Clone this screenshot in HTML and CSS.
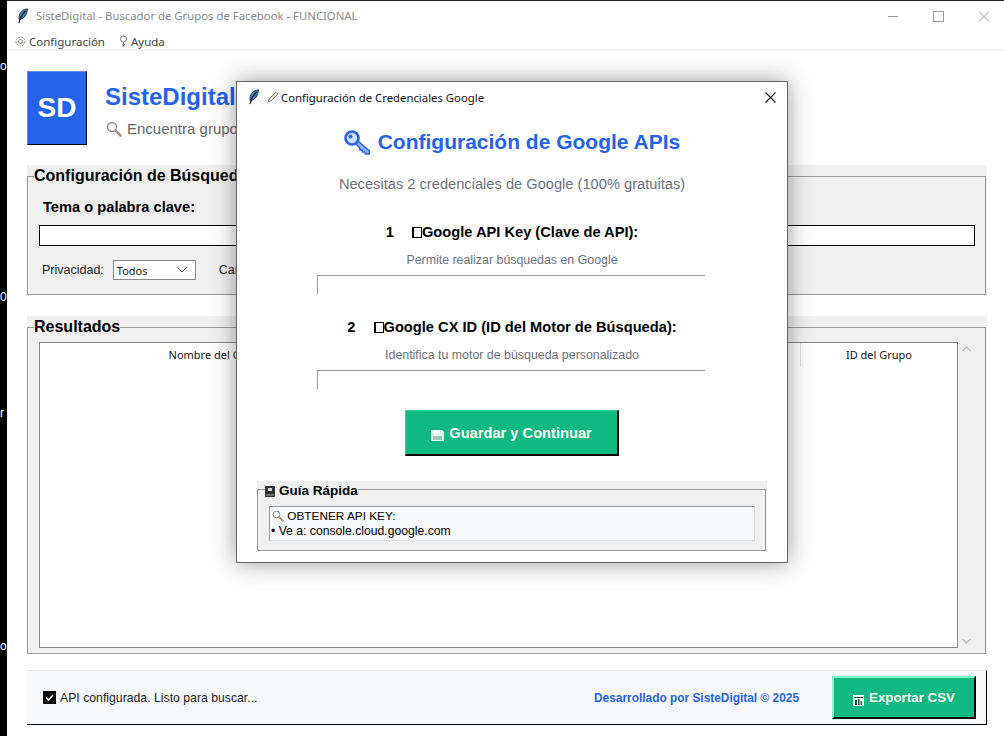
FILE: index.html
```html
<!DOCTYPE html>
<html lang="es">
<head>
    <meta charset="UTF-8">
    <title>SisteDigital - Buscador de Grupos de Facebook</title>
    <link rel="stylesheet" href="styles.css">
</head>
<body>
    <svg class="sprite" width="0" height="0">
        <symbol id="feather" viewBox="0 0 12 18">
            <path d="M11.500.500C7 .500 2.500 3.500 1.500 8.500c-.4 2-.3 3.500 0 5.500l1.500-1c3.500-1 6.500-4 7.500-8 .4-1.500.6-3 1-4.500z" fill="#3f83c8" stroke="#10202c" stroke-width="1"/>
            <path d="M9 3C6 6 3 10 1 17.500" fill="none" stroke="#0b0f14" stroke-width="1.300"/>
        </symbol>
        <symbol id="lens" viewBox="0 0 16 16">
            <circle cx="6" cy="6" r="4.500" fill="#f4f7f8" stroke="#8a8f92" stroke-width="1.300"/>
            <path d="M9.500 9.500l5 5" stroke="#a8917f" stroke-width="2.600" stroke-linecap="round"/>
        </symbol>
    </svg>

    <!-- restos del escritorio detras de la ventana -->
    <div class="desk-char desk-1">o</div>
    <div class="desk-char desk-2">0</div>
    <div class="desk-char desk-3">r</div>
    <div class="desk-char desk-4">o</div>

    <div class="window">
        <div class="titlebar">
            <svg class="feather-icon"><use href="#feather"/></svg>
            <span class="title-text">SisteDigital - Buscador de Grupos de Facebook - FUNCIONAL</span>
            <div class="win-controls">
                <svg width="12" height="12" viewBox="0 0 12 12"><path d="M0 6.500h10" stroke="#999"/></svg>
                <svg width="12" height="12" viewBox="0 0 12 12"><rect x=".5" y="1.500" width="10" height="10" fill="none" stroke="#999"/></svg>
                <svg width="12" height="12" viewBox="0 0 12 12"><path d="M1 1.500l10 10M11 1.500l-10 10" stroke="#999"/></svg>
            </div>
        </div>
        <div class="menubar">
            <span class="menu-item">
                <svg width="11" height="11" viewBox="0 0 11 11"><circle cx="5.500" cy="5.500" r="2" fill="none" stroke="#888"/><circle cx="5.500" cy="5.500" r="4.500" fill="none" stroke="#888" stroke-dasharray="2 1"/></svg>
                Configuración
            </span>
            <span class="menu-item">
                <svg width="9" height="12" viewBox="0 0 9 12"><circle cx="4.500" cy="4" r="3" fill="none" stroke="#888"/><path d="M4.500 7v4M3 9.500h3M3 11h3" stroke="#888"/></svg>
                Ayuda
            </span>
        </div>

        <div class="content">
            <header class="brand">
                <div class="logo">SD</div>
                <div class="brand-text">
                    <h1>SisteDigital</h1>
                    <p><svg class="lens-big"><use href="#lens"/></svg> Encuentra grupos</p>
                </div>
            </header>

            <div class="group group-search">
                <fieldset>
                    <legend>Configuración de Búsqueda</legend>
                    <div class="field-label">Tema o palabra clave:</div>
                    <div class="entry"></div>
                    <div class="options">
                        <span>Privacidad:</span>
                        <div class="select">Todos
                            <svg width="10" height="6" viewBox="0 0 10 6"><path d="M.5.500L5 5 9.500.500" fill="none" stroke="#555"/></svg>
                        </div>
                        <span class="option-next">Cantidad:</span>
                    </div>
                </fieldset>
            </div>

            <div class="group group-results">
                <fieldset>
                    <legend>Resultados</legend>
                    <div class="results-body">
                        <div class="tree">
                            <div class="tree-head">
                                <div class="col-name">Nombre del Grupo</div>
                                <div class="col-id">ID del Grupo</div>
                            </div>
                        </div>
                        <div class="scrollbar">
                            <svg width="9" height="6" viewBox="0 0 9 6"><path d="M.5 5L4.500 1l4 4" fill="none" stroke="#bbb" stroke-width="1.500"/></svg>
                            <svg width="9" height="6" viewBox="0 0 9 6"><path d="M.5 1l4 4 4-4" fill="none" stroke="#bbb" stroke-width="1.500"/></svg>
                        </div>
                    </div>
                </fieldset>
            </div>

            <footer class="statusbar">
                <svg class="check" width="13" height="13" viewBox="0 0 13 13"><rect width="13" height="13" fill="#0a0a0a"/><path d="M3 6.500l2.500 2.500L10 4" fill="none" stroke="#fff" stroke-width="1.600"/></svg>
                <span class="status-text">API configurada. Listo para buscar...</span>
                <span class="credit">Desarrollado por SisteDigital © 2025</span>
                <button class="btn btn-export">
                    <svg class="btn-icon" width="11" height="11" viewBox="0 0 11 11"><rect width="11" height="11" fill="#eef7f3"/><path d="M1 2h9v1H1zM2 5h2v5H2zM5 4h1.500v6H5zM7.500 6H9v4H7.500z" fill="#27584a"/></svg>
                    Exportar CSV
                </button>
            </footer>
        </div>
    </div>

    <!-- dialogo de credenciales -->
    <div class="dialog">
        <div class="dialog-title">
            <svg class="feather-icon"><use href="#feather"/></svg>
            <svg width="12" height="12" viewBox="0 0 12 12"><path d="M1.500 10.500l.6-2.500L9 1.200l1.800 1.800L4 9.900z" fill="#f3e9d8" stroke="#777"/></svg>
            <span>Configuración de Credenciales Google</span>
            <svg class="dialog-close" width="11" height="11" viewBox="0 0 11 11"><path d="M.5.500l10 10M10.500.500l-10 10" stroke="#111" stroke-width="1.100"/></svg>
        </div>
        <div class="dialog-body">
            <h2>
                <svg width="26" height="25" viewBox="0 0 26 25"><circle cx="8" cy="8" r="6.500" fill="#cfdfff" stroke="#2563eb" stroke-width="2.600"/><circle cx="6.500" cy="6.500" r="2" fill="#2563eb"/><path d="M12 14l2.500-2.500L25.500 21v3h-4l-1-2-2 0-.5-2-2 0-.5-2z" fill="#8fb0f8" stroke="#2563eb" stroke-width="1.400"/></svg>
                Configuración de Google APIs
            </h2>
            <p class="dialog-sub">Necesitas 2 credenciales de Google (100% gratuitas)</p>

            <div class="cred-label cred-first">1<span class="missing-glyph"></span>Google API Key (Clave de API):</div>
            <div class="cred-hint">Permite realizar búsquedas en Google</div>
            <div class="cred-input"></div>

            <div class="cred-label cred-second">2<span class="missing-glyph"></span>Google CX ID (ID del Motor de Búsqueda):</div>
            <div class="cred-hint">Identifica tu motor de búsqueda personalizado</div>
            <div class="cred-input"></div>

            <button class="btn btn-save">
                <svg class="btn-icon" width="13" height="12" viewBox="0 0 13 12"><path d="M0 1h11l2 2v9H0z" fill="#e6f3ee"/><path d="M3 1h6v3H3z" fill="#fff"/><path d="M2 7h9v4H2z" fill="#9fc7b8"/></svg>
                Guardar y Continuar
            </button>

            <div class="group group-guide">
                <fieldset>
                    <legend>
                        <svg class="guide-icon" width="10" height="11" viewBox="0 0 10 11"><rect width="10" height="11" rx="1" fill="#2e3338"/><rect x="3" y="2" width="4" height="3" fill="#d8d8d8"/><path d="M1 9h8" stroke="#aaa"/></svg>
                        Guía Rápida
                    </legend>
                    <div class="guide-text">
                        <div class="guide-head"><svg class="lens-small"><use href="#lens"/></svg> OBTENER API KEY:</div>
                        <div>• Ve a: console.cloud.google.com</div>
                    </div>
                </fieldset>
            </div>
        </div>
    </div>
</body>
</html>
```

FILE: styles.css
```css
* { margin: 0; padding: 0; box-sizing: border-box; }
html, body { height: 736px; overflow: hidden; }
body {
    background: #000;
    font-family: "Liberation Sans", Arial, sans-serif;
    color: #000;
    position: relative;
}
.sprite { position: absolute; }

.desk-char {
    position: absolute;
    left: 0;
    width: 7px;
    overflow: hidden;
    color: #fff;
    font-size: 12px;
    line-height: 13px;
}
.desk-1 { top: 60px; }
.desk-2 { top: 291px; }
.desk-3 { top: 407px; }
.desk-4 { top: 640px; }

.window {
    margin-left: 7px;
    height: 736px;
    background: #fff;
    border-top: 1px solid #222;
}
.titlebar {
    height: 29px;
    display: flex;
    align-items: center;
    padding-left: 11px;
    font-family: "Noto Sans", sans-serif;
    font-size: 11.33px;
    color: #8a8a8a;
}
.feather-icon { width: 10px; height: 16px; flex: none; }
.title-text { margin-left: 8px; }
.win-controls {
    margin-left: auto;
    display: flex;
    gap: 33px;
    padding-right: 14px;
}
.menubar {
    height: 21px;
    display: flex;
    align-items: center;
    gap: 14px;
    padding: 3px 0 0 8px;
    border-bottom: 2px solid #f0f0f0;
    font-family: "Noto Sans", sans-serif;
    font-size: 11.5px;
    color: #444;
}
.menu-item { display: flex; align-items: center; gap: 3px; }

.content { padding: 20px 17px 0 20px; }
.brand { display: flex; height: 74px; }
.logo {
    width: 60px;
    height: 74px;
    background: #2563eb;
    color: #fff;
    font-size: 28px;
    font-weight: bold;
    display: flex;
    align-items: center;
    justify-content: center;
    border-top: 1px solid #5f8df2;
    border-left: 1px solid #5f8df2;
    border-right: 1px solid #000;
    border-bottom: 1px solid #000;
}
.brand-text { margin-left: 19px; padding-top: 12px; }
.brand-text h1 { margin-left: -1px; font-size: 24px; line-height: 28px; color: #2563eb; }
.brand-text p {
    margin-top: 8px;
    font-size: 15px;
    line-height: 20px;
    color: #666;
    display: flex;
    align-items: center;
    gap: 5px;
}
.lens-big { width: 16px; height: 16px; }

.group { background: #f0f0f0; }
.group fieldset {
    height: 100%;
    margin-right: 1px;
    border: 1px solid #999;
    min-width: 0;
}
.group legend {
    margin-left: 6px;
    font-size: 16px;
    font-weight: bold;
    line-height: 22px;
}
.group-search { height: 130px; margin-top: 20px; }
.group-results { height: 338px; margin-top: 21px; }

.group-search fieldset { padding: 0 10px 0 11px; }
.group-search legend { margin-left: -5px; }
.field-label {
    margin: 10px 0 0 4px;
    font-size: 14.67px;
    font-weight: bold;
    line-height: 20px;
}
.entry {
    height: 21px;
    margin-top: 8px;
    background: #fff;
    border: 1px solid #000;
}
.options {
    display: flex;
    align-items: center;
    margin-top: 14px;
    padding-left: 3px;
    font-size: 12.5px;
    color: #222;
}
.select {
    width: 83px;
    height: 20px;
    margin-left: 9px;
    padding: 0 8px 0 3px;
    display: flex;
    align-items: center;
    justify-content: space-between;
    background: #fff;
    border: 1px solid #888;
    font-family: "Noto Sans", sans-serif;
    font-size: 11px;
}
.option-next { margin-left: 23px; }

.results-body { display: flex; height: 306px; padding-left: 11px; margin-top: 4px; }
.tree {
    width: 919px;
    height: 306px;
    background: #fff;
    border: 1px solid #888;
}
.tree-head {
    display: flex;
    height: 24px;
    font-family: "Noto Sans", sans-serif;
    font-size: 11px;
    line-height: 24px;
    color: #111;
    text-align: center;
}
.col-name { width: 354px; }
.col-id { margin-left: auto; width: 157px; border-left: 1px solid #e4e4e4; }
.scrollbar {
    width: 18px;
    margin-left: 4px;
    display: flex;
    flex-direction: column;
    justify-content: space-between;
    padding: 4px 0;
}

.statusbar {
    height: 55px;
    margin-top: 16px;
    display: flex;
    align-items: center;
    padding: 0 10px 0 16px;
    background: #f8f9fa;
    border-top: 1px solid #e2e2e2;
    border-right: 1px solid #000;
    border-bottom: 1px solid #000;
    font-size: 12px;
}
.status-text { margin-left: 4px; font-size: 12.25px; color: #222; }
.credit { margin-left: auto; font-size: 11.9px; font-weight: bold; color: #2563eb; }
.btn {
    display: flex;
    align-items: center;
    justify-content: center;
    gap: 5px;
    font-family: "Liberation Sans", Arial, sans-serif;
    font-weight: bold;
    color: #fff;
    background: #10b981;
    cursor: pointer;
}
.btn-icon { margin-top: 5px; }
.btn-export {
    width: 144px;
    height: 43px;
    margin-left: 33px;
    font-size: 13.33px;
    border-style: solid;
    border-width: 2px;
    border-color: #86f5c9 #000 #000 #86f5c9;
}
.check { flex: none; }

.dialog {
    position: absolute;
    left: 236px;
    top: 81px;
    width: 552px;
    height: 482px;
    background: #fff;
    border: 1px solid #666;
    box-shadow: 0 0 22px rgba(0,0,0,0.4);
}
.dialog-title {
    height: 30px;
    display: flex;
    align-items: center;
    gap: 8px;
    padding-left: 12px;
    font-family: "Noto Sans", sans-serif;
    font-size: 11.33px;
    color: #111;
}
.dialog-close { margin-left: auto; margin-right: 11px; }
.dialog-title span { margin-left: -6px; }
.dialog-body { display: flex; flex-direction: column; align-items: center; padding-top: 15px; text-align: center; }
.dialog-body h2 {
    display: flex;
    align-items: center;
    gap: 8px;
    font-size: 21px;
    line-height: 30px;
    color: #2563eb;
}
.dialog-sub { margin-top: 17px; font-size: 14.67px; line-height: 20px; color: #6b7280; }
.cred-label { font-size: 14.67px; font-weight: bold; line-height: 20px; }
.cred-first { margin-top: 28px; }
.cred-second { margin-top: 23px; }
.missing-glyph {
    display: inline-block;
    width: 10px;
    height: 11px;
    margin-left: 18px;
    border: 1px solid #000;
    border-left-width: 2px;
    vertical-align: -1px;
}
.cred-hint { margin-top: 10px; font-size: 12.38px; line-height: 16px; color: #6b7280; }
.cred-input {
    width: 388px;
    height: 19px;
    margin: 7px 2px 0 0;
    border-top: 1px solid #999;
    border-left: 1px solid #999;
}
.btn-save {
    width: 214px;
    height: 46px;
    margin-top: 21px;
    font-size: 14.67px;
    border-style: solid;
    border-width: 1px 2px 2px 1px;
    border-color: #34d399 #000 #000 #34d399;
}

.group-guide { width: 510px; height: 70px; margin-top: 25px; text-align: left; }
.group-guide fieldset { padding: 0 10px 0 11px; }
.group-guide legend {
    display: flex;
    align-items: flex-start;
    gap: 4px;
    height: 16px;
    padding-top: 2px;
    margin-left: -4px;
    font-size: 13.5px;
    line-height: 16px;
}
.guide-icon { margin-top: 3px; }
.guide-text {
    height: 35px;
    margin-top: 9px;
    padding: 2px 1px 0;
    background: #f8f9fa;
    border: 1px solid #ddd;
    border-top-color: #999;
    border-left-color: #999;
    font-size: 12.2px;
    line-height: 15px;
}
.guide-head { font-size: 11.8px; }
.lens-small { width: 12px; height: 12px; vertical-align: -2px; margin-left: 1px; }
```
